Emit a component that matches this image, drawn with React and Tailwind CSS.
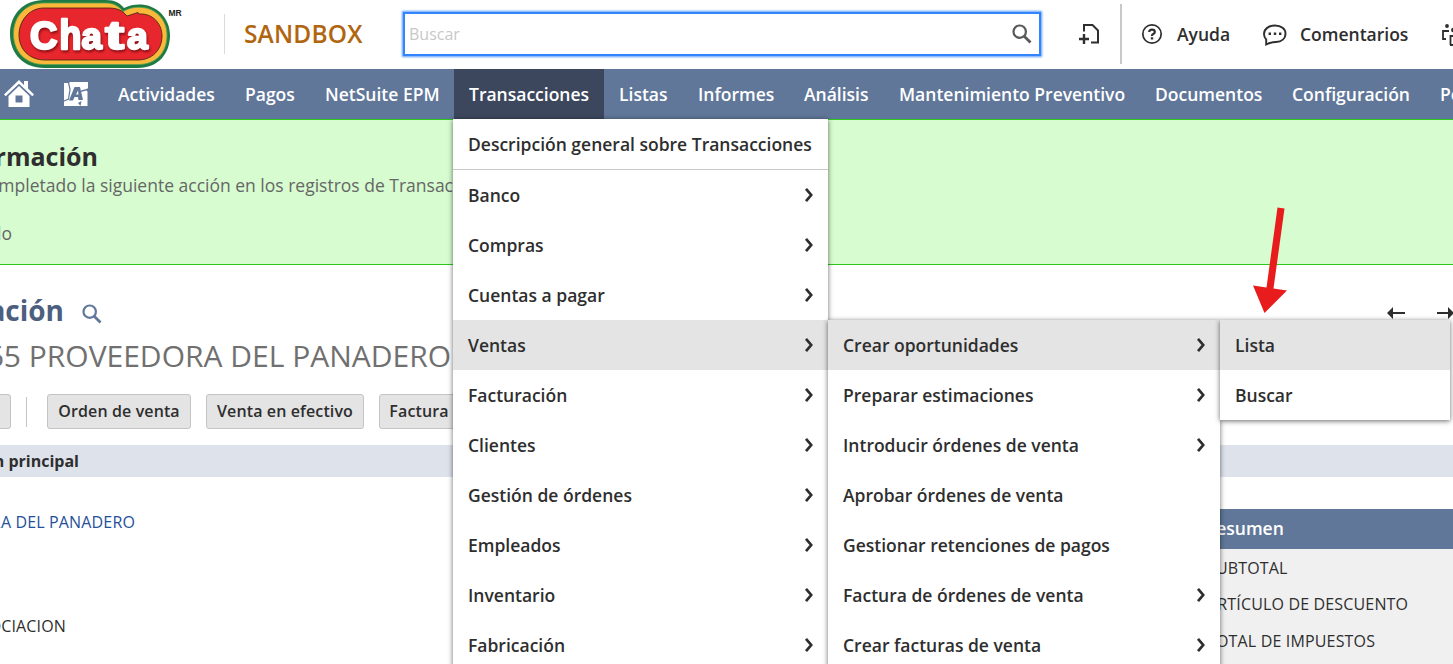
import React from "react";

const NAV = [
  ["Actividades", "w-[127px]"],
  ["Pagos", "w-[80px]"],
  ["NetSuite EPM", "w-[144px]"],
  ["Transacciones", "w-[150px]"],
  ["Listas", "w-[79px]"],
  ["Informes", "w-[106px]"],
  ["Análisis", "w-[95px]"],
  ["Mantenimiento Preventivo", "w-[256px]"],
  ["Documentos", "w-[137px]"],
  ["Configuración", "w-[148px]"],
  ["Personalización", "w-[160px]"],
];

const MAIN = ["Banco", "Compras", "Cuentas a pagar", "Ventas", "Facturación", "Clientes", "Gestión de órdenes", "Empleados", "Inventario", "Fabricación"];

const SALES = [
  ["Crear oportunidades", true],
  ["Preparar estimaciones", true],
  ["Introducir órdenes de venta", true],
  ["Aprobar órdenes de venta", false],
  ["Gestionar retenciones de pagos", false],
  ["Factura de órdenes de venta", true],
  ["Crear facturas de venta", true],
];

function Chevron() {
  return (
    <svg width="10" height="16" viewBox="0 0 10 16" fill="none" className="shrink-0">
      <path d="M2 1.8 7.2 8 2 14.2" stroke="#2e2e2e" strokeWidth="2.7" />
    </svg>
  );
}

function Item({ label, arrow, active }) {
  return (
    <div className={"flex h-[50px] shrink-0 items-center justify-between pl-[15px] pr-[14px] " + (active ? "bg-[#e4e4e4]" : "bg-white")}>
      <span>{label}</span>
      {arrow && <Chevron />}
    </div>
  );
}

function Magnifier({ className, size }) {
  return (
    <svg width={size} height={size} viewBox="0 0 20 20" fill="none" stroke="currentColor" className={className}>
      <circle cx="7.7" cy="7.7" r="6.2" strokeWidth="2.2" />
      <path d="m12.2 12.2 6.3 6.3" strokeWidth="2.8" />
    </svg>
  );
}

function Logo() {
  const shape = "M44 0H106C115 0 120 3 124 8C130 5 136 4 142 4.500C158 6 170 19 170 35C170 54 158 68 138 68H44C24 68 10 54 10 34S24 0 44 0Z";
  return (
    <svg width="190" height="69" viewBox="0 0 190 69" className="shrink-0">
      <path d={shape} fill="#1f7a45" />
      <path d="M44 3H106C114 3 119 6.500 123 11.500C130 7.500 136 7 142 7.500C156 8.500 167 20 167 35C167 53 156 64.500 138 64.500H44C26 64.500 13.500 52 13.500 34S26 3 44 3Z" fill="#fbb83a" stroke="#58a64b" strokeWidth="0.8" />
      <path d="M44 8H108C117 8 122 10 127 16L138 12.500L139 14C152 13 162 23 162 36C162 50 152 60 138 60H45C29 60 19 49 19 35S29 8 44 8Z" fill="#e8262d" stroke="#3a2010" strokeWidth="0.8" />
      <g
        fontFamily="Liberation Sans, sans-serif"
        fontWeight="700"
        fontSize="38"
        strokeWidth="2.400"
        strokeLinejoin="round"
        fill="#fff"
        stroke="#fff"
        transform="translate(0 49)"
        className="drop-shadow-[1px_2px_1px_rgba(110,10,15,0.75)]"
      >
        <text x="30">C</text>
        <text transform="translate(59.500 0) scale(.94 1.080)">h</text>
        <text transform="translate(81.500 0) scale(.96 .96)">a</text>
        <text transform="translate(105.500 0) scale(1.450 1)">t</text>
        <text transform="translate(127 0) scale(.98 .96)">a</text>
      </g>
      <text x="168.500" y="16" fontFamily="Liberation Sans, sans-serif" fontWeight="700" fontSize="8.500" fill="#222">MR</text>
    </svg>
  );
}

function Header() {
  return (
    <header className="flex h-[69px] shrink-0 items-center bg-white">
      <Logo />
      <div className="mb-px ml-[34px] h-10 w-px shrink-0 bg-[#dadada]" />
      <div className="mb-px ml-[19px] w-[159px] shrink-0 text-[24.500px] font-semibold tracking-[0.15px] text-[#b0660f]">SANDBOX</div>
      <div className="mb-px flex h-[44px] w-[638px] shrink-0 items-center justify-between border-2 border-[#3385ff] pl-1 pr-[7px] shadow-[0_0_2px_1px_#5c9dff]">
        <span className="text-[16px] text-[#c8c8c8]">Buscar</span>
        <Magnifier size={20} className="text-[#585858]" />
      </div>
      <svg width="22" height="24" viewBox="0 0 22 24" fill="none" stroke="#2e2e2e" strokeWidth="2" className="mb-px ml-[38px] shrink-0">
        <path d="M5 9.500V3h8.500L19 8.500V20.500h-7" />
        <path d="M5 12v10M0 17h10" strokeWidth="2.400" />
      </svg>
      <div className="mb-[1px] ml-[19px] h-[60px] w-[2px] shrink-0 bg-[#c8c8c8]" />
      <svg width="22" height="22" viewBox="0 0 22 22" fill="none" stroke="#2e2e2e" strokeWidth="1.700" className="mb-px ml-[19px] shrink-0">
        <circle cx="11" cy="11" r="9.200" />
        <path d="M8.200 9Q8.200 6.700 11 6.700T13.800 9Q13.800 10.300 12.300 11T11 13" strokeWidth="2.200" />
        <path d="M11 14.300v2.200" strokeWidth="2.400" />
      </svg>
      <span className="ml-[14px] w-[86px] shrink-0 text-[17.500px] font-semibold text-[#2e2e2e]">Ayuda</span>
      <svg width="24" height="22" viewBox="0 0 24 22" fill="none" stroke="#2e2e2e" strokeWidth="1.900" className="shrink-0">
        <path d="M3.200 20.500V15.500C1.600 13.800 1 12 1 10 1 5 5.800 1.500 12 1.500S22.500 5 22.500 9.500c0 5-4 8.200-9.500 8.500-4 .2-7 1-9.800 2.500Z" />
        <path d="M5.600 9.800H8M10.800 9.800h2.400M16 9.800h2.400" strokeWidth="2.400" />
      </svg>
      <span className="ml-[13px] w-[142px] shrink-0 text-[17.500px] font-semibold text-[#2e2e2e]">Comentarios</span>
      <svg width="24" height="24" viewBox="0 0 24 24" fill="none" stroke="#2e2e2e" strokeWidth="1.800" className="shrink-0">
        <circle cx="5" cy="3" r="1" /><circle cx="11.500" cy="7" r="1.500" /><path d="M7 8H1v8h3M8.500 22v-9H16v9H8" />
      </svg>
    </header>
  );
}

function NavBar() {
  return (
    <nav className="flex h-[50px] shrink-0 bg-[#607799] text-[17.500px] font-semibold text-white">
      <div className="flex w-[103px] shrink-0 items-center">
        <svg width="30" height="28" viewBox="0 0 30 28" className="ml-1 shrink-0" fill="#fff">
          <path d="M15 0 0 14.500l1.700 1.700L15 3.800 28.300 16.200 30 14.500 24 8.500V1h-4v4Z" />
          <path d="M15 6 4.500 16v11h21V16Zm-3.500 9.500h7v7h-7Z" fillRule="evenodd" />
        </svg>
        <svg width="26" height="26" viewBox="0 0 26 26" className="ml-[29px] shrink-0">
          <path d="M1 2h5l1-1h18v6l-1.500 2.500 1 1V25H1Z" fill="#fff" />
          <path d="M5.500 1.500 7 8.500 5.500 18 1 20" fill="none" stroke="#607799" strokeWidth="1.200" />
          <path d="M6 19.500 11.500 6h5.500l3 13h-4.500l-.5-3h-3.500l-1.500 3.500Zm7-6h2.500L15 9.500Z" fill="#607799" fillRule="evenodd" />
          <path d="m18 9.500 7-2v1.500l-7 2ZM15 22l3.500-2-1 5Z" fill="#607799" />
        </svg>
      </div>
      {NAV.map(([label, w]) => (
        <div key={label} className={"flex shrink-0 items-center whitespace-nowrap pl-[15px] " + w + (label === "Transacciones" ? " bg-[#3c475d]" : "")}>{label}</div>
      ))}
    </nav>
  );
}

function Clip({ className, children }) {
  return <div className={"flex justify-end overflow-hidden whitespace-nowrap " + className}>{children}</div>;
}

function Button({ className, children }) {
  return <div className={"flex h-[35px] shrink-0 items-center justify-center rounded-[3px] border border-[#c4c4c4] bg-[#e4e4e4] pb-[2px] " + className}>{children}</div>;
}

function Page() {
  return (
    <main className="flex flex-1 flex-col overflow-hidden bg-white">
      <section className="h-[146px] shrink-0 border-y border-[#2cc81e] bg-[#d7fcd0]">
        <Clip className="mt-[18px] w-[98px] text-[25px] leading-9 font-bold text-[#2e2e2e]">Información</Clip>
        <Clip className="mt-px h-6 w-[453px] text-[17.500px] leading-5 text-[#666]">Se ha completado la siguiente acción en los registros de Transac</Clip>
        <Clip className="mt-6 w-[12px] text-[17.500px] leading-5 text-[#666]">Creado</Clip>
      </section>
      <div className="mt-[27px] flex h-9 shrink-0 items-center">
        <Clip className="w-[64px] text-[28px] leading-9 font-bold text-[#4d5f7f]">Estimación</Clip>
        <Magnifier size={20} className="ml-[18px] mt-[7px] text-[#607799]" />
        <div className="ml-auto mt-[6px] flex gap-8">
          <svg width="18" height="12" viewBox="0 0 18 12" className="shrink-0"><path d="M0 6 6 0v5h12v2H6v5Z" fill="#2e2e2e" /></svg>
          <svg width="16" height="12" viewBox="0 0 16 12" className="shrink-0"><path d="M17 6 11 0v5H0v2h11v5Z" fill="#2e2e2e" /></svg>
        </div>
      </div>
      <Clip className="mt-[6px] h-[44px] w-[451px] shrink-0 text-[30px] leading-[44px] text-[#707070]">C0365 PROVEEDORA DEL PANADERO</Clip>
      <div className="mt-4 flex h-[35px] shrink-0 items-center text-[16px] font-semibold tracking-[0.12px] text-[#2e2e2e]">
        <Button className="-ml-2 w-[19px]" />
        <div className="ml-[15px] h-[30px] w-px bg-[#c4c4c4]" />
        <Button className="ml-5 w-[144px]">Orden de venta</Button>
        <Button className="ml-[15px] w-[158px]">Venta en efectivo</Button>
        <Button className="ml-[15px] w-[80px]">Factura</Button>
      </div>
      <div className="mt-4 h-8 shrink-0 bg-[#dee3eb]">
        <Clip className="w-[79px] text-[16px] leading-8 font-bold text-[#2e2e2e]">Información principal</Clip>
      </div>
      <div className="flex flex-1 justify-between text-[16px]">
        <div className="tracking-[0.15px]">
          <Clip className="mt-[33px] w-[135px] leading-6 text-[#25509a]">PROVEEDORA DEL PANADERO</Clip>
          <Clip className="mt-20 w-[66px] leading-6 text-[#2e2e2e]">ASOCIACION</Clip>
        </div>
        <aside className="mt-8 w-[248px] bg-[#f0f0f0] text-[#2e2e2e]">
          <div className="flex h-10 items-center bg-[#607799] pb-[2px] text-[17.500px] font-semibold text-white">Resumen</div>
          <div className="pl-[2px] pt-px leading-[36.400px] font-normal tracking-[0.16px]">
            <div>SUBTOTAL</div>
            <div>ARTÍCULO DE DESCUENTO</div>
            <div>TOTAL DE IMPUESTOS</div>
          </div>
        </aside>
      </div>
    </main>
  );
}

export default function App() {
  return (
    <div className="relative flex h-[664px] w-full flex-col overflow-hidden font-['Open_Sans',sans-serif]">
      <Header />
      <NavBar />
      <Page />
      <div className="absolute left-[453px] top-[119px] w-[375px] bg-white text-[17.500px] font-semibold text-[#2e2e2e] shadow-[0_1px_5px_rgba(0,0,0,0.6)]">
        <div className="flex h-[51px] items-center whitespace-nowrap border-b border-[#c8c8c8] pl-[15px]">Descripción general sobre Transacciones</div>
        {MAIN.map((m) => <Item key={m} label={m} arrow active={m === "Ventas"} />)}
      </div>
      <div className="absolute left-[828px] top-[320px] w-[392px] bg-white text-[17.500px] font-semibold text-[#2e2e2e] shadow-[0_1px_5px_rgba(0,0,0,0.6)]">
        {SALES.map(([m, a], i) => <Item key={m} label={m} arrow={a} active={i === 0} />)}
      </div>
      <div className="absolute left-[1220px] top-[320px] w-[230px] bg-white text-[17.500px] font-semibold text-[#2e2e2e] shadow-[0_1px_5px_rgba(0,0,0,0.6)]">
        <Item label="Lista" active />
        <Item label="Buscar" />
      </div>
      <svg width="36" height="108" viewBox="0 0 36 108" className="absolute left-[1252px] top-[206px]">
        <path d="M25.500 1.500 32.500 2.500 21.500 82.500 35 84.500 12.500 107 1 79.500 14.500 81.500Z" fill="#e81c1c" />
      </svg>
    </div>
  );
}
